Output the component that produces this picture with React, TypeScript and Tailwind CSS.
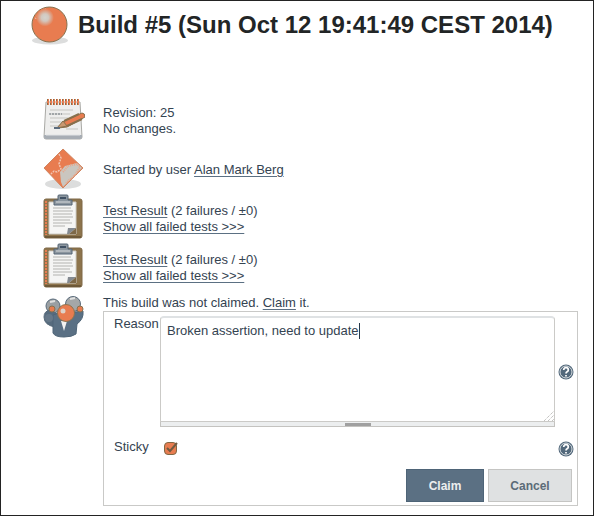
import type { ReactNode } from "react";

function BallIcon() {
  return (
    <svg viewBox="0 0 40 40" className="h-10 w-10 shrink-0" aria-hidden="true">
      <defs>
        <radialGradient id="shine">
          <stop offset="0" stopColor="#d4d2cd" />
          <stop offset="0.4" stopColor="#d2c8bf" />
          <stop offset="1" stopColor="#e87c50" />
        </radialGradient>
      </defs>
      <ellipse cx="20" cy="35.500" rx="18" ry="4" fill="#dcdddd" />
      <circle cx="19.500" cy="19.500" r="17.500" fill="#e87c50" stroke="#86714f" />
      <path d="M6 14q3-8 10-10" fill="none" stroke="#dcc3b5" strokeWidth="2" strokeDasharray="1 1" />
      <circle cx="15" cy="12.500" r="9" fill="url(#shine)" />
    </svg>
  );
}

function NotepadIcon() {
  return (
    <svg viewBox="0 0 44 44" className="h-11 w-11" aria-hidden="true">
      <path d="M5 5h34l2 35q0 2-2 2H5q-2 0-2-2z" fill="#eeeeed" stroke="#a9a9a5" />
      <path d="M3 38h38v2q0 2-2 2H5q-2 0-2-2z" fill="#a7adb4" />
      <path d="M5 38h34" stroke="#e2e4e5" />
      <path d="M9 13h23M9 17h20M9 21h18M9 25h13M9 29h9M25 32h12" stroke="#c5c5c1" />
      <path d="M8 17h13" stroke="#69727b" strokeDasharray="2 1" />
      <path d="M6 5h33" stroke="#e87c50" strokeWidth="6" strokeDasharray="2 1" />
      <path d="M6 7h33M6 3h33" stroke="#886d49" strokeWidth="2" strokeDasharray="1 2" />
      <path d="M17 31l6-7 18-8q3 0 3 4l-18 10z" fill="#e87c50" stroke="#87704d" strokeLinejoin="round" />
      <path d="M23 24l15-7M26 29l15-7" stroke="#87704d" strokeWidth="2" />
      <path d="M16 31l6-7 4 5z" fill="#c99870" stroke="#87704d" />
      <path d="M13 31h6" stroke="#5c6c7c" strokeWidth="2" />
    </svg>
  );
}

function DiamondIcon() {
  return (
    <svg viewBox="0 0 44 44" className="h-11 w-11" aria-hidden="true">
      <ellipse cx="22" cy="38" rx="18" ry="5" fill="#dcdddd" />
      <path d="M22 3l20 19-20 20L3 22z" fill="#e87c50" stroke="#d08560" />
      <path d="M22 41l-2-5-1-10 5-6 12-3 5 5-19 19z" fill="#cac6bf" />
      <path d="M22 26l5-6 9-2 3 3-5 8-9 8" fill="none" stroke="#e8a88b" strokeDasharray="1 1" strokeWidth="2" />
      <path d="M18 8l2 4-2 6 2 5-4 3-3-1-3 3" fill="none" stroke="#f2c4b0" strokeWidth="1.500" strokeDasharray="2 1" />
    </svg>
  );
}

function ClipboardIcon() {
  return (
    <svg viewBox="0 0 44 48" className="h-12 w-11" aria-hidden="true">
      <rect x="3" y="6" width="38" height="39" rx="2" fill="#8d744c" stroke="#7e6846" />
      <path d="M5 8v34" stroke="#e87c50" strokeWidth="2" strokeDasharray="2 1" />
      <path d="M4 44h36" stroke="#6e5939" strokeWidth="2" />
      <path d="M8 9h27v32H8z" fill="#f5f5f4" stroke="#cfccc6" />
      <path d="M12 15h18M12 18h20M12 21h19M12 24h20M12 27h17M12 30h19M12 33h12" stroke="#c9c9c6" strokeWidth="1.500" />
      <path d="M27 35h8l-7 6h-2z" fill="#848a91" />
      <path d="M35 35v6h-7z" fill="#7d6848" />
      <path d="M13 7h4V3q0-1 1-1h8q1 0 1 1v4h4v5H13z" fill="#8c969f" stroke="#546475" />
      <path d="M15 9h14" stroke="#d7dadc" />
      <path d="M19 5h6" stroke="#405164" strokeWidth="2" />
    </svg>
  );
}

function PeopleIcon() {
  return (
    <svg viewBox="0 0 44 44" className="h-11 w-11" aria-hidden="true">
      <g stroke="#596b7b">
        <circle cx="12" cy="11" r="7" fill="#9a9fa3" />
        <circle cx="32" cy="9" r="7.500" fill="#a4a7a8" />
        <path d="M3 22q0-6 6-7l8 4-3 13Q3 30 3 22z" fill="#566b7e" />
      </g>
      <path d="M34 17l8-1q1 8-6 13l-1 10q-4 3-12 3-9 0-11-4V20l6-2z" fill="#5a7084" stroke="#4f6578" />
      <path d="M20 26h6l-3 10z" fill="#f2f2f1" />
      <circle cx="8" cy="23" r="4" fill="#667889" />
      <circle cx="11" cy="14" r="3" fill="#e87c50" stroke="#86714f" />
      <circle cx="39" cy="14" r="3" fill="#e87c50" stroke="#86714f" />
      <circle cx="25" cy="18" r="8.500" fill="#e87c50" stroke="#8d744f" />
      <circle cx="22" cy="16" r="2.500" fill="#ded2c9" />
      <path d="M9 7l5-1M29 4l5-1" stroke="#e0e1e1" strokeWidth="2" />
    </svg>
  );
}

function HelpButton({ topic }: { topic: string }) {
  return (
    <button type="button" aria-label={topic} className="h-4 w-4 shrink-0">
      <svg viewBox="0 0 16 16" className="h-4 w-4" aria-hidden="true">
        <circle cx="8" cy="8" r="7.500" fill="#52687b" />
        <circle cx="8" cy="8" r="6" fill="none" stroke="#d8dde0" />
        <path d="M5.700 6q0-2.300 2.300-2.300T10.300 6q0 1.200-1.200 1.800Q8 8.400 8 9.500M8 11v1.500" fill="none" stroke="#fff" strokeWidth="1.700" />
      </svg>
    </button>
  );
}

function TextLink({ children }: { children: ReactNode }) {
  return (
    <a href="#" className="underline decoration-[#5b7083] decoration-1 underline-offset-2">
      {children}
    </a>
  );
}

function Row({ icon, children }: { icon: ReactNode; children: ReactNode }) {
  return (
    <div className="flex h-[49px] items-center">
      <div className="w-[62px] shrink-0 pb-1">{icon}</div>
      <div>{children}</div>
    </div>
  );
}

function TestResult() {
  return (
    <Row icon={<ClipboardIcon />}>
      <p><TextLink>Test Result</TextLink> (2 failures / ±0)</p>
      <p><TextLink>Show all failed tests &gt;&gt;&gt;</TextLink></p>
    </Row>
  );
}

function ClaimForm() {
  return (
    <form className="flex flex-col border border-[#c9c9c7] pt-1 pb-[3px] pl-2.5">
      <div className="flex items-center">
        <label htmlFor="reason" className="w-[46px] shrink-0 self-start">Reason</label>
        <div className="min-w-0 flex-1">
          <div className="relative">
            <textarea
              id="reason"
              defaultValue="Broken assertion, need to update"
              className="block h-[106px] w-full resize-none rounded-t-sm border border-t-2 border-[#cbcac7] border-t-[#dfe2e4] bg-white px-1.5 py-[5px] outline-none"
            />
            <span className="absolute top-[7px] left-[199px] h-4 w-px bg-[#25394b]" />
            <svg viewBox="0 0 10 10" className="absolute right-px bottom-px h-2.5 w-2.5" aria-hidden="true">
              <path d="M0 10L10 0M4 10l6-6M8 10l2-2" stroke="#a9a9a7" strokeDasharray="1 1" />
            </svg>
          </div>
          <div className="flex h-[5px] items-center justify-center border border-t-0 border-[#c4c3c0] bg-[#eceeef]">
            <div className="h-[3px] w-[26px] bg-[#a0a0a0]" />
          </div>
        </div>
        <div className="flex w-[22px] shrink-0 justify-end pr-[3px]"><HelpButton topic="Help for Reason" /></div>
      </div>
      <div className="mt-2.5 flex h-6 items-center">
        <label htmlFor="sticky" className="w-[50px] shrink-0 pb-1">Sticky</label>
        <div className="relative h-[14px] w-[14px]">
          <input
            id="sticky"
            type="checkbox"
            defaultChecked
            className="block h-[13px] w-[13px] appearance-none rounded-sm border border-[#806844] bg-[#e87c50]"
          />
          <svg viewBox="0 0 14 14" className="pointer-events-none absolute inset-0 h-[14px] w-[14px]" aria-hidden="true">
            <path d="M3 6l3 3 7-8" fill="none" stroke="#705b40" strokeWidth="2" />
          </svg>
        </div>
        <div className="ml-auto flex pr-[3px]"><HelpButton topic="Help for Sticky" /></div>
      </div>
      <div className="mt-2 flex justify-end gap-1 pr-[5px] text-[12px] font-bold">
        <button type="submit" className="h-[33px] w-[78px] border border-[#4e6477] bg-[#5b7083] text-[#eceeef]">Claim</button>
        <button type="button" className="h-[33px] w-[84px] border border-[#c5c5c3] bg-[#dfe1e2] text-[#5b6b78]">Cancel</button>
      </div>
    </form>
  );
}

export default function App() {
  return (
    <main className="min-h-screen border border-[#232323] bg-white pt-1 pr-[15px] pb-[9px] font-['Liberation_Sans',Arial,sans-serif] text-[13px] leading-4 text-[#344351]">
      <header className="flex items-center gap-2 pl-[29px]">
        <BallIcon />
        <h1 className="text-[24px] leading-10 font-bold whitespace-nowrap text-[#222526]">
          Build #5 (Sun Oct 12 19:41:49 CEST 2014)
        </h1>
      </header>
      <div className="mt-[51px] pl-10">
        <Row icon={<NotepadIcon />}>
          <p>Revision: 25</p>
          <p>No changes.</p>
        </Row>
        <Row icon={<DiamondIcon />}>
          <p>Started by user <TextLink>Alan Mark Berg</TextLink></p>
        </Row>
        <TestResult />
        <TestResult />
        <div className="flex items-start pt-[3px]">
          <div className="w-[62px] shrink-0"><PeopleIcon /></div>
          <div className="min-w-0 flex-1">
            <p>This build was not claimed. <TextLink>Claim</TextLink> it.</p>
            <ClaimForm />
          </div>
        </div>
      </div>
    </main>
  );
}
